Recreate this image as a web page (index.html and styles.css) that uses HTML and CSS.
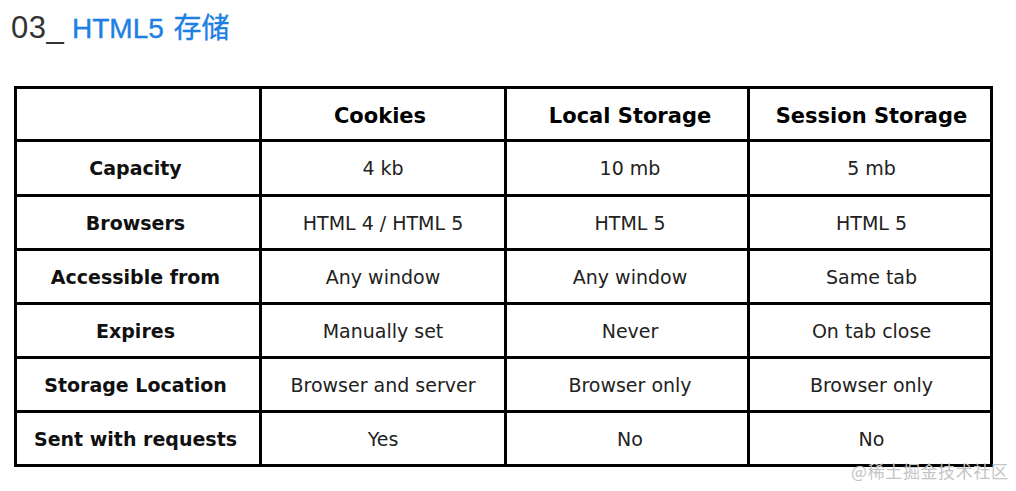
FILE: index.html
```html
<!DOCTYPE html>
<html>
<head>
<meta charset="utf-8">
<link rel="stylesheet" href="styles.css">
</head>
<body>
<div class="page">
  <h1 class="title"><span class="num">03_</span> <span class="link">HTML5 存储</span></h1>
  <div class="table">
    <div class="cell"></div>
    <div class="cell head c2">Cookies</div>
    <div class="cell head c3">Local Storage</div>
    <div class="cell head c4">Session Storage</div>

    <div class="cell label">Capacity</div>
    <div class="cell val c2">4 kb</div>
    <div class="cell val c3">10 mb</div>
    <div class="cell val c4">5 mb</div>

    <div class="cell label">Browsers</div>
    <div class="cell val c2">HTML 4 / HTML 5</div>
    <div class="cell val c3">HTML 5</div>
    <div class="cell val c4">HTML 5</div>

    <div class="cell label">Accessible from</div>
    <div class="cell val c2">Any window</div>
    <div class="cell val c3">Any window</div>
    <div class="cell val c4">Same tab</div>

    <div class="cell label">Expires</div>
    <div class="cell val c2">Manually set</div>
    <div class="cell val c3">Never</div>
    <div class="cell val c4">On tab close</div>

    <div class="cell label">Storage Location</div>
    <div class="cell val c2">Browser and server</div>
    <div class="cell val c3">Browser only</div>
    <div class="cell val c4">Browser only</div>

    <div class="cell label">Sent with requests</div>
    <div class="cell val c2">Yes</div>
    <div class="cell val c3">No</div>
    <div class="cell val c4">No</div>
  </div>
  <div class="watermark">@稀土掘金技术社区</div>
</div>
</body>
</html>
```
FILE: styles.css
```css
html, body {
  margin: 0;
  padding: 0;
  background: #ffffff;
}
.page {
  position: relative;
  width: 1016px;
  height: 491px;
  overflow: hidden;
}
.title {
  margin: 0;
  padding: 10px 0 0 11px;
  height: 78px;
  box-sizing: border-box;
  font-family: "Liberation Sans", "Noto Sans CJK SC", sans-serif;
  font-weight: normal;
  font-size: 28px;
  line-height: 36px;
}
.title .num {
  color: #333333;
  font-size: 31px;
  letter-spacing: 0.5px;
}
.title .link {
  color: #1e7fe3;
  -webkit-text-stroke: 0.4px #1e7fe3;
  word-spacing: 2px;
}
.table {
  margin: 8px 0 0 14px;
  width: 979px;
  display: grid;
  grid-template-columns: 242px 242px 240px 240px;
  grid-template-rows: 50px 52px 51px 51px 51px 51px 51px;
  gap: 3px;
  padding: 3px;
  box-sizing: border-box;
  background: #000000;
}
.cell {
  background: #ffffff;
  display: flex;
  align-items: center;
  justify-content: center;
  font-family: "DejaVu Sans", Verdana, sans-serif;
  white-space: nowrap;
}
.c3 {
  padding-left: 6px;
}
.c4 {
  padding-left: 3px;
}
.head {
  font-weight: bold;
  font-size: 21px;
  color: #000000;
  padding-top: 3px;
}
.head.c2 {
  padding-right: 6px;
}
.label {
  font-weight: bold;
  font-size: 19px;
  color: #111111;
  padding-right: 5px;
}
.val {
  font-size: 19px;
  color: #222222;
}
.watermark {
  position: absolute;
  left: 851px;
  top: 459px;
  font-family: "Noto Sans CJK SC", sans-serif;
  font-size: 17px;
  letter-spacing: 0.6px;
  color: #c4c4c4;
  line-height: 24px;
}
```
